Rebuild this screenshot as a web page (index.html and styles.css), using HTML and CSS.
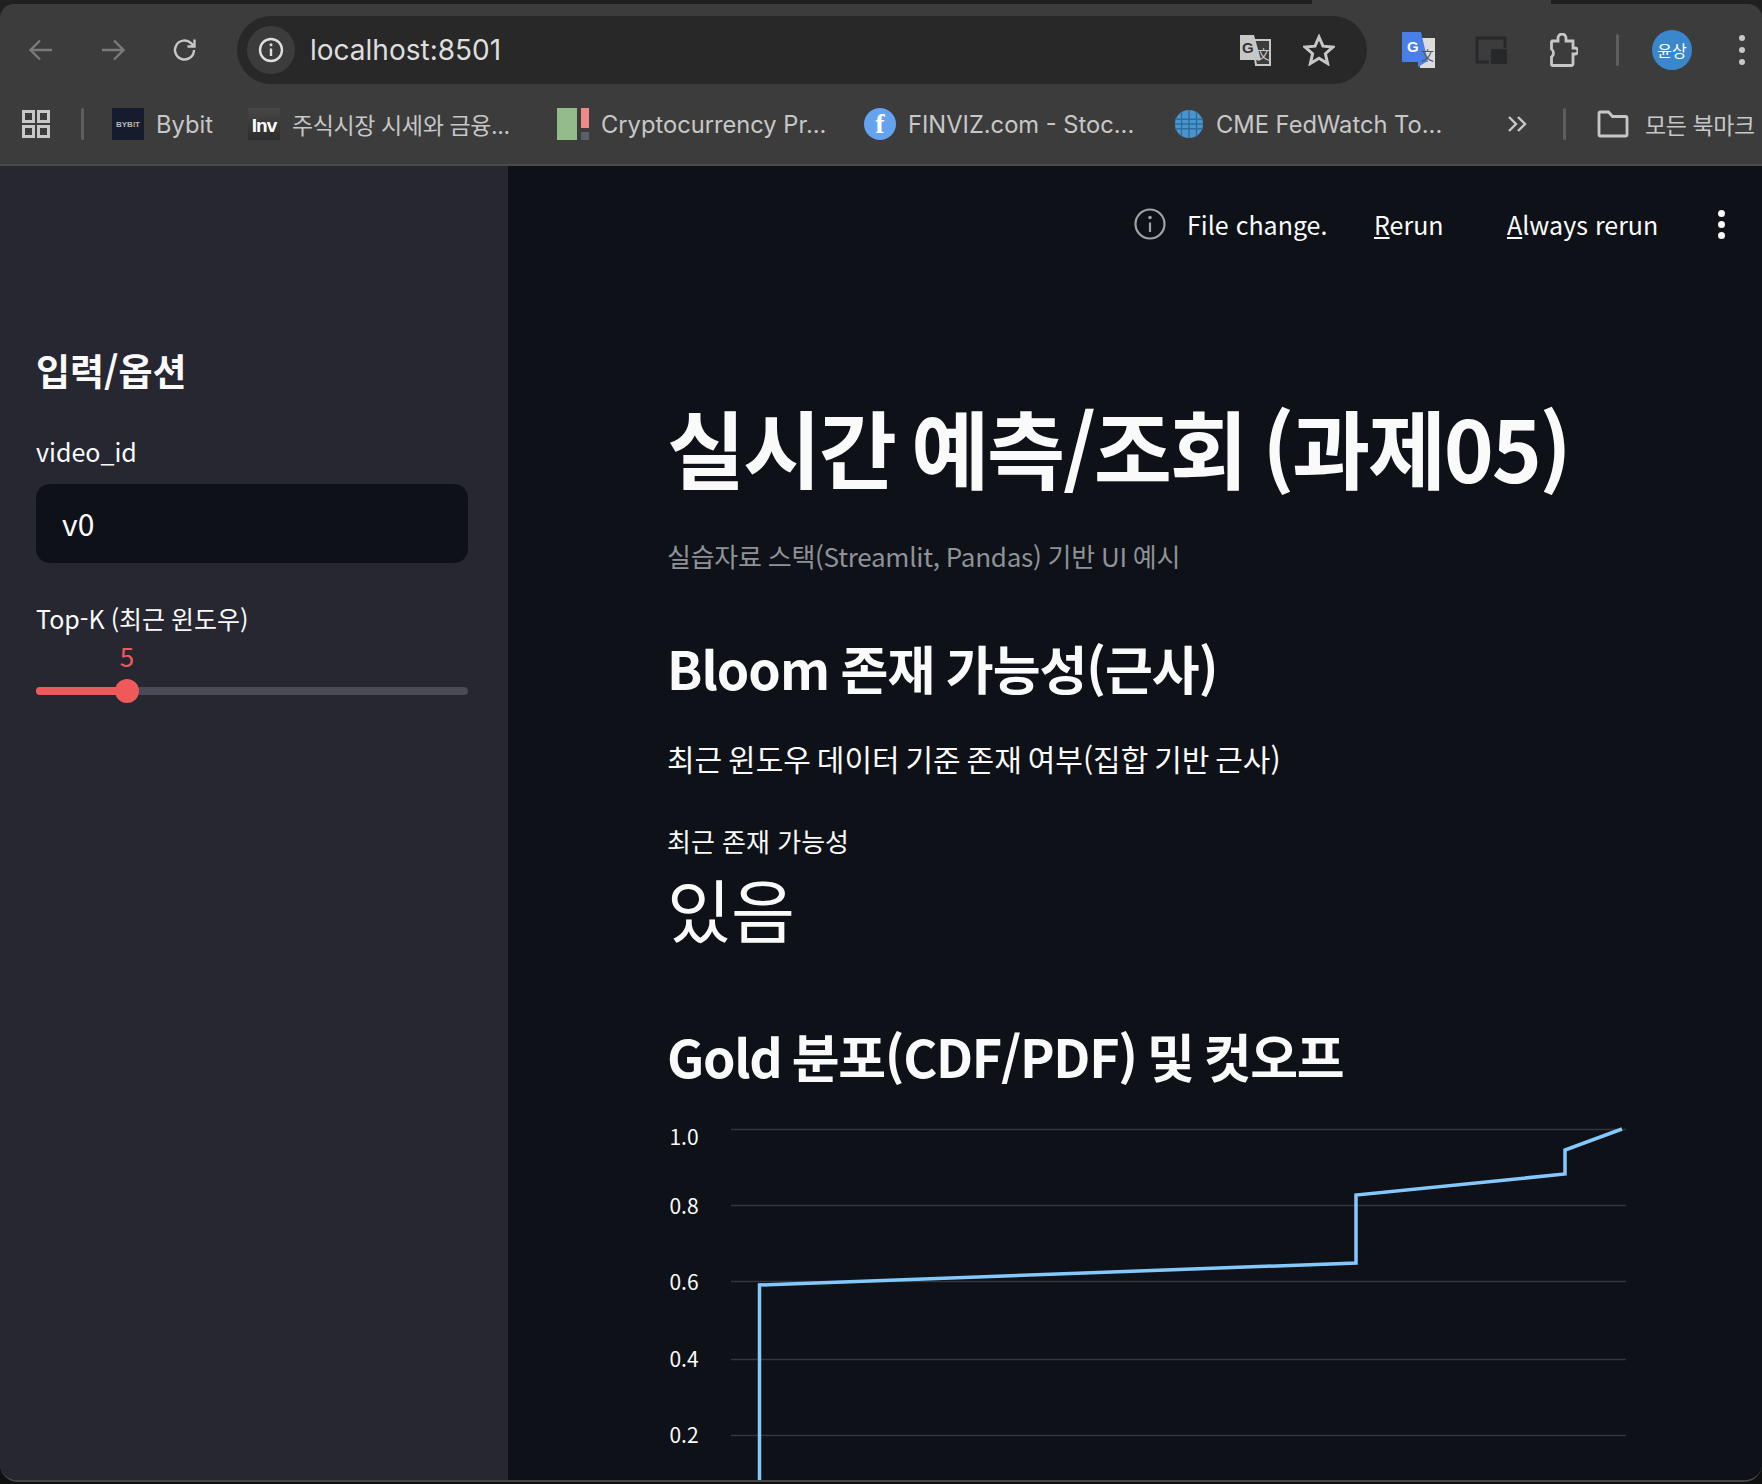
FILE: index.html
```html
<!DOCTYPE html>
<html lang="ko">
<head>
  <meta charset="UTF-8">
  <meta name="viewport" content="width=device-width, initial-scale=1.0">
  <title>실시간 예측/조회 (과제05)</title>
  <link rel="stylesheet" href="styles.css">
</head>
<body>
  <div class="window">
    <div class="tabstrip"><div class="tab-end"></div></div>

    <div class="toolbar">
      <svg class="nav nav-off" viewBox="0 0 26 26"><path d="M24 13H3M12 3.5 2.5 13l9.5 9.5"/></svg>
      <svg class="nav nav-off nav-forward" viewBox="0 0 26 26"><path d="M2 13h21M14 3.5l9.5 9.5-9.5 9.500"/></svg>
      <svg class="nav nav-reload" viewBox="0 0 26 26"><path d="M22 13a9.500 9.500 0 1 1-3-6.900L22 9M22.500 2.500V9.500H15.500"/></svg>
      <div class="omnibox">
        <div class="site-info">
          <svg viewBox="0 0 26 26" class="info-svg"><circle cx="13" cy="13" r="11"/><path d="M13 11.500V19"/><circle class="dot" cx="13" cy="7.800" r="1.500"/></svg>
        </div>
        <span class="url">localhost:8501</span>
        <svg class="translate-ico" viewBox="0 0 34 32">
          <path class="tr-back" d="M14 6h18v25H18z"/>
          <path class="tr-front" d="M2 1h14l7 25H2z"/>
          <text x="4" y="19" class="tr-g">G</text>
          <text x="19" y="25" class="tr-w">文</text>
        </svg>
        <svg class="star-ico" viewBox="0 0 32 32"><path d="m16 3 4 9.200 9.800.900-7.400 6.600 2.200 9.800L16 24.300l-8.600 5.200 2.200-9.800-7.400-6.600 9.800-.900z"/></svg>
      </div>
      <svg class="ext-gt" viewBox="0 0 33 36">
        <path class="gt-back" d="M14 6h19v30H18z"/>
        <path class="gt-front" d="M0 0h19l7 30 -2 0-8 5V30H0z"/>
        <text x="5" y="20" class="gt-g">G</text>
        <text x="19" y="28" class="gt-w">文</text>
      </svg>
      <svg class="ext-pip" viewBox="0 0 32 28"><path class="pip-frame" d="M14 26H2V2h28v10"/><rect class="pip-box" x="16" y="13" width="16" height="15"/></svg>
      <svg class="ext-puzzle" viewBox="0 0 30 34"><path d="M4 8h6V5a4 4 0 0 1 8 0v3h7v7h2a3 3 0 0 1 0 6h-2v10a1.500 1.500 0 0 1-1.500 1.500H5a1.500 1.500 0 0 1-1.500-1.500v-7a5 5 0 0 0 0-8V9.500A1.500 1.500 0 0 1 4 8z"/></svg>
      <div class="tool-sep"></div>
      <div class="avatar">윤상</div>
      <div class="kebab"><i></i><i></i><i></i></div>
    </div>

    <div class="bookmarks">
      <svg class="apps" viewBox="0 0 28 28"><path d="M1.500 1.500h10v10h-10zM16.500 1.500h10v10h-10zM1.500 16.500h10v10h-10zM16.500 16.500h10v10h-10z"/></svg>
      <div class="bar-sep"></div>
      <div class="bm"><span class="fav fav-bybit">BYB<b>I</b>T</span><span>Bybit</span></div>
      <div class="bm"><span class="fav fav-inv">Inv</span><span class="ko">주식시장 시세와 금융...</span></div>
      <div class="bm"><span class="fav fav-cmc"><i class="g"></i><i class="r"></i><i class="k"></i></span><span>Cryptocurrency Pr...</span></div>
      <div class="bm"><span class="fav fav-finviz">f</span><span>FINVIZ.com - Stoc...</span></div>
      <div class="bm"><svg class="fav fav-globe" viewBox="0 0 32 32"><circle cx="16" cy="16" r="15"/><path d="M1 11h30M1 16h30M1 21h30M8 3v26M16 1v30M24 3v26"/></svg><span>CME FedWatch To...</span></div>
      <svg class="more" viewBox="0 0 20 20"><path d="m2 3 7 7-7 7M11 3l7 7-7 7"/></svg>
      <div class="bar-sep"></div>
      <div class="bm bm-folder"><svg class="folder" viewBox="0 0 32 28"><path d="M2 3.500A1.500 1.500 0 0 1 3.500 2h8l4 4.500h13A1.500 1.500 0 0 1 30 8v16.500a1.500 1.500 0 0 1-1.500 1.500h-25A1.500 1.500 0 0 1 2 24.500z"/></svg><span class="ko">모든 북마크</span></div>
    </div>

    <div class="app">
      <aside class="sidebar">
        <h2 class="side-title">입력/옵션</h2>
        <label class="field-label">video_id</label>
        <div class="text-input">v0</div>
        <label class="field-label field-label-k">Top-K (최근 윈도우)</label>
        <div class="slider-value">5</div>
        <div class="slider-track">
          <div class="slider-fill"></div>
          <div class="slider-thumb"></div>
        </div>
      </aside>

      <main class="main">
        <div class="status">
          <svg class="status-ico" viewBox="0 0 32 32"><circle cx="16" cy="16" r="14.500"/><path d="M16 14.500V24"/><circle class="dot" cx="16" cy="9.500" r="1.800"/></svg>
          <span class="status-text">File change.</span>
          <span class="status-btn status-rerun"><u>R</u>erun</span>
          <span class="status-btn status-always"><u>A</u>lways rerun</span>
          <div class="status-menu"><i></i><i></i><i></i></div>
        </div>

        <h1 class="title">실시간 예측/조회 (과제05)</h1>
        <p class="caption">실습자료 스택(Streamlit, Pandas) 기반 UI 예시</p>
        <h2 class="section section-bloom">Bloom 존재 가능성(근사)</h2>
        <p class="body-text">최근 윈도우 데이터 기준 존재 여부(집합 기반 근사)</p>
        <div class="metric-label">최근 존재 가능성</div>
        <div class="metric-value">있음</div>
        <h2 class="section section-gold">Gold 분포(CDF/PDF) 및 컷오프</h2>

        <svg class="chart" viewBox="0 0 1093 359">
          <g class="grid">
            <path d="M62 8.500H957M62 84.500H957M62 160.500H957M62 238.500H957M62 314.500H957"/>
          </g>
          <g class="ticks">
            <text x="15" y="24">1.0</text>
            <text x="15" y="93">0.8</text>
            <text x="15" y="169">0.6</text>
            <text x="15" y="246">0.4</text>
            <text x="15" y="322">0.2</text>
          </g>
          <path class="cdf" d="M90.500 359V164L687 142V74L896 53V29L953 8"/>
        </svg>
      </main>
    </div>
  </div>
</body>
</html>
```

FILE: styles.css
```css
* { box-sizing: border-box; }
html, body { margin: 0; padding: 0; background: #101010; }
body { width: 1762px; height: 1484px; overflow: hidden; font-family: "Noto Sans CJK KR", "Noto Sans", sans-serif; color: #fafafa; }

.window { height: 1482px; display: flex; flex-direction: column; background: #1f201f; border-radius: 0 0 18px 18px; border-bottom: 2px solid #45464a; overflow: hidden; }

/* browser chrome */
.tabstrip { height: 4px; background: #1f201f; flex: none; }
.tab-end { width: 239px; height: 4px; margin-left: 1312px; background: #3c3c3c; }

.toolbar { height: 92px; flex: none; display: flex; align-items: center; padding-left: 28px; background: #3c3c3c; border-radius: 14px 14px 0 0; }
.nav { width: 26px; height: 26px; fill: none; stroke: #c7c7c7; stroke-width: 2.4; }
.nav-off { stroke: #7a7a7a; }
.nav-forward { margin-left: 46px; }
.nav-reload { margin-left: 46px; }
.omnibox { width: 1130px; height: 68px; margin-left: 39px; border-radius: 34px; background: #282828; display: flex; align-items: center; padding-left: 10px; }
.site-info { width: 48px; height: 48px; border-radius: 50%; background: #3c3c3c; display: flex; align-items: center; justify-content: center; }
.info-svg { width: 26px; height: 26px; fill: none; stroke: #dedede; stroke-width: 2.4; }
.info-svg .dot { fill: #dedede; stroke: none; }
.url { margin-left: 15px; width: 928px; font-family: Inter, sans-serif; font-size: 28px; color: #dedede; }
.translate-ico { width: 34px; height: 32px; }
.tr-back { fill: #3c3c3c; stroke: #c7c7c7; stroke-width: 2; }
.tr-front { fill: #c7c7c7; }
.tr-g { font-family: "Liberation Sans", sans-serif; font-weight: 700; font-size: 15px; fill: #333; }
.tr-w { font-family: "Noto Sans CJK SC", sans-serif; font-size: 13px; fill: #c7c7c7; }
.star-ico { width: 32px; height: 32px; margin-left: 31px; fill: none; stroke: #c7c7c7; stroke-width: 3; }
.ext-gt { width: 33px; height: 36px; margin-left: 35px; }
.gt-back { fill: #dcdcdc; }
.gt-front { fill: #4a7ee8; }
.gt-g { font-family: "Liberation Sans", sans-serif; font-weight: 700; font-size: 15px; fill: #fff; }
.gt-w { font-family: "Noto Sans CJK SC", sans-serif; font-size: 13px; fill: #555; }
.ext-pip { width: 32px; height: 28px; margin-left: 40px; }
.pip-frame { fill: none; stroke: #26282c; stroke-width: 3; }
.pip-box { fill: #26282c; }
.ext-puzzle { width: 30px; height: 34px; margin-left: 41px; fill: none; stroke: #c7c7c7; stroke-width: 2.8; }
.tool-sep { width: 3px; height: 32px; margin-left: 38px; background: #5e5e5e; border-radius: 2px; }
.avatar { width: 40px; height: 40px; margin-left: 33px; border-radius: 50%; background: #3a87cd; font-size: 16px; color: #fff; display: flex; align-items: center; justify-content: center; }
.kebab { margin-left: 47px; display: flex; flex-direction: column; gap: 6px; }
.kebab i { display: block; width: 6px; height: 6px; border-radius: 50%; background: #c7c7c7; }

.bookmarks { height: 70px; flex: none; display: grid; grid-template-columns: 59px 31px 136px 309px 307px 310px 333px 56px 34px 1fr; align-items: center; padding: 0 0 12px 22px; font-family: Inter, "Noto Sans CJK KR", sans-serif; font-size: 23.700px; color: #c7c7c7; background: #3c3c3c; border-bottom: 2px solid #4a4a4a; white-space: nowrap; }
.ko { font-size: 23px; letter-spacing: -0.4px; }
.apps { width: 28px; height: 28px; fill: none; stroke: #c7c7c7; stroke-width: 3; }
.bar-sep { width: 3px; height: 32px; background: #5e5e5e; border-radius: 2px; }
.bm { display: flex; align-items: center; gap: 12px; }
.bm-folder { gap: 16px; }
.fav { width: 32px; height: 32px; flex: none; display: flex; align-items: center; justify-content: center; }
.fav-bybit { background: #171b2e; color: #b9b9b9; font-family: "Liberation Sans", sans-serif; font-size: 8px; font-weight: 700; }
.fav-bybit b { color: #d9963a; }
.fav-inv { background: linear-gradient(#474747, #2c2c2c); color: #fff; font-family: "Liberation Sans", sans-serif; font-size: 19px; font-weight: 700; letter-spacing: -1px; padding-top: 4px; }
.fav-cmc { position: relative; }
.fav-cmc i { position: absolute; display: block; }
.fav-cmc .g { left: 0; top: 0; width: 20px; height: 32px; background: #94bb8a; }
.fav-cmc .r { left: 24px; top: 0; width: 8px; height: 20px; background: #ee8b88; }
.fav-cmc .k { left: 24px; top: 24px; width: 8px; height: 8px; background: #5d5f68; }
.fav-finviz { border-radius: 50%; background: #65a3f0; color: #fff; font-family: "Liberation Serif", serif; font-size: 28px; font-weight: 700; }
.fav-globe { width: 30px; height: 30px; }
.fav-globe circle { fill: #4a95cf; }
.fav-globe path { fill: none; stroke: #2d6c9e; stroke-width: 1.5; }
.more { width: 20px; height: 20px; fill: none; stroke: #c7c7c7; stroke-width: 2.4; }
.folder { width: 32px; height: 28px; flex: none; fill: none; stroke: #c7c7c7; stroke-width: 2.8; }

/* streamlit app */
.app { flex: 1; display: flex; min-height: 0; }
.sidebar { width: 508px; flex: none; background: #262730; padding: 179px 40px 0 36px; }
.side-title { margin: 0; font-size: 37px; line-height: 50px; font-weight: 700; }
.field-label { display: block; margin-top: 39px; font-size: 25px; line-height: 34px; }
.field-label-k { margin-top: 38px; word-spacing: -1px; }
.text-input { margin-top: 16px; height: 79px; border-radius: 14px; background: #0e1117; padding-left: 26px; font-size: 30px; line-height: 79px; }
.slider-value { margin-top: 6px; width: 182px; text-align: center; font-size: 26px; line-height: 30px; color: #ee5a5a; }
.slider-track { position: relative; margin-top: 16px; height: 8px; border-radius: 4px; background: #4a4b57; }
.slider-fill { width: 91px; height: 8px; border-radius: 4px 0 0 4px; background: #ee5a5a; }
.slider-thumb { position: absolute; left: 79px; top: -8px; width: 24px; height: 24px; border-radius: 50%; background: #ee5a5a; }

.main { flex: 1; min-width: 0; background: #0e1117; padding-left: 159px; overflow: hidden; }
.status { height: 116px; margin-left: -159px; display: flex; align-items: center; font-size: 25px; }
.status-ico { width: 32px; height: 32px; margin-left: 626px; fill: none; stroke: #a0a2a6; stroke-width: 2.2; }
.status-ico .dot { fill: #a0a2a6; stroke: none; }
.status-text { margin-left: 21px; width: 138px; white-space: nowrap; }
.status-rerun { margin-left: 49px; width: 68px; }
.status-always { margin-left: 65px; width: 150px; white-space: nowrap; }
.status-menu { margin-left: 61px; display: flex; flex-direction: column; gap: 4px; }
.status-menu i { display: block; width: 7px; height: 7px; border-radius: 50%; background: #fafafa; }

.title { margin: 119px 0 0; font-size: 85px; line-height: 90px; font-weight: 700; letter-spacing: -2.300px; word-spacing: -5px; white-space: nowrap; }
.caption { margin: 45px 0 0; font-size: 26px; line-height: 40px; letter-spacing: -0.250px; word-spacing: -1px; color: #8f9298; }
.section { margin: 0; font-size: 52px; line-height: 70px; font-weight: 700; letter-spacing: -1px; word-spacing: -2px; white-space: nowrap; }
.section-bloom { margin-top: 57px; }
.section-gold { margin-top: 68px; letter-spacing: -1.300px; word-spacing: -3px; }
.body-text { margin: 33px 0 0; font-size: 30px; line-height: 44px; word-spacing: -2.500px; }
.metric-label { margin-top: 43px; font-size: 26px; line-height: 36px; }
.metric-value { margin-top: 4px; font-size: 69.500px; line-height: 90px; }
.chart { display: block; margin: 30px 0 0 2px; width: 1093px; height: 359px; }
.grid path { fill: none; stroke: #34363d; stroke-width: 1.5; }
.ticks text { font-family: "Noto Sans CJK KR", sans-serif; font-size: 21px; fill: #fafafa; text-anchor: middle; }
.cdf { fill: none; stroke: #83c9ff; stroke-width: 3.500; }
```
